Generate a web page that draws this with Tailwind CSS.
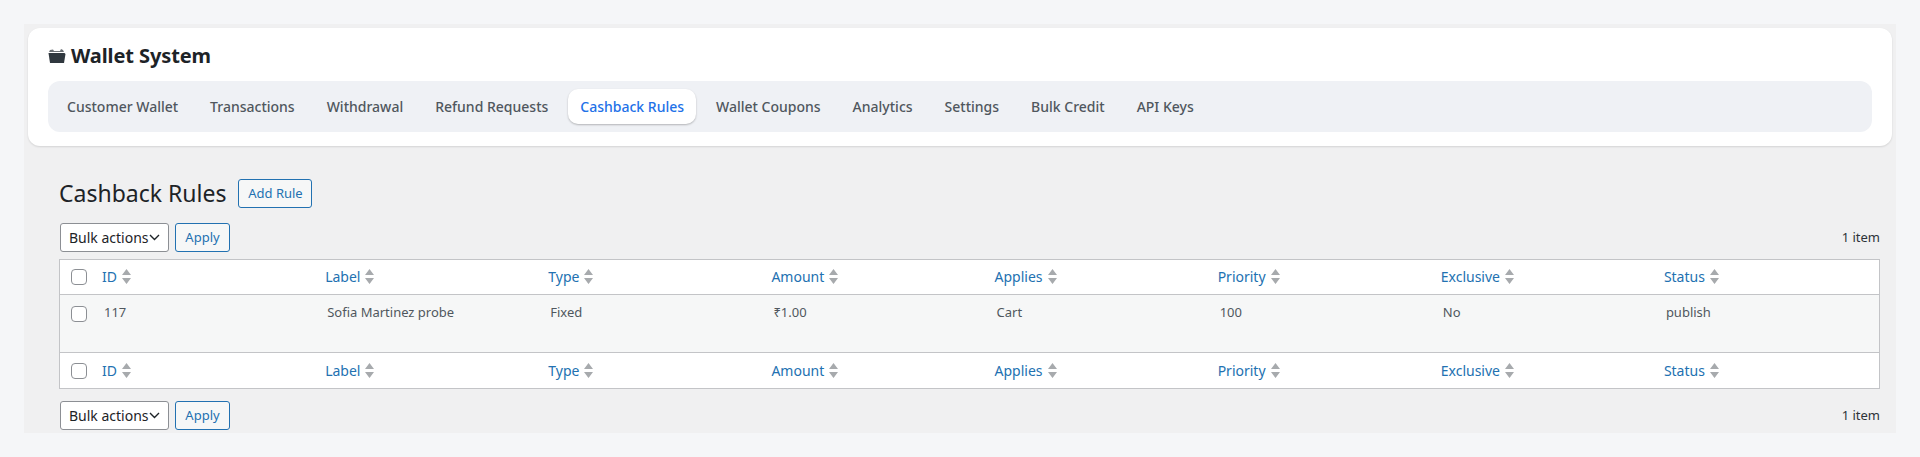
<!doctype html>
<html>
<head>
<meta charset="utf-8">
<script src="https://cdn.jsdelivr.net/npm/@tailwindcss/browser@4"></script>
</head>
<body class="bg-[#f5f6f8] font-['Noto_Sans',sans-serif] h-[457px] overflow-hidden">
<div class="ml-[24px] mr-[24px] pt-[24px]">
<div class="bg-[#f0f0f1] h-[409px] px-[4px] pt-[4px]">
  <div class="bg-white rounded-[12px] h-[118px] px-[20px] pt-[14px] shadow-[0_1px_2px_rgba(0,0,0,0.12)]">
    <h1 class="flex items-center gap-[5px] h-[28px] text-[20px] font-bold text-[#1d2327] leading-[28px] tracking-[-0.1px]">
      <svg class="w-[18px] h-[16px]" viewBox="0 0 18 16"><path d="M1 4 L2 2 L5 1.5 L6 3 L12 3 L13 1 L15 2 L16 4 Z" fill="#6b7075"/><path d="M0.5 5 H16.5 L17.5 6 L16 15 H2 Z" fill="#30383f"/></svg>
      <span>Wallet System</span>
    </h1>
    <nav class="mt-[11px] h-[51px] bg-[#eff1f5] rounded-[12px] px-[7px] flex items-center gap-[8px] text-[14px] font-medium text-[#50575e]">
      <a class="px-[12px] h-[35px] flex items-center">Customer Wallet</a>
      <a class="px-[12px] h-[35px] flex items-center">Transactions</a>
      <a class="px-[12px] h-[35px] flex items-center">Withdrawal</a>
      <a class="px-[12px] h-[35px] flex items-center">Refund Requests</a>
      <a class="px-[12px] h-[35px] flex items-center bg-white rounded-[10px] text-[#2271e8] shadow-[0_1px_2px_rgba(0,0,0,0.25)]">Cashback Rules</a>
      <a class="px-[12px] h-[35px] flex items-center">Wallet Coupons</a>
      <a class="px-[12px] h-[35px] flex items-center">Analytics</a>
      <a class="px-[12px] h-[35px] flex items-center">Settings</a>
      <a class="px-[12px] h-[35px] flex items-center">Bulk Credit</a>
      <a class="px-[12px] h-[35px] flex items-center">API Keys</a>
    </nav>
  </div>
  <div class="pl-[31px] pr-[12px] text-[#50575e] text-[13px]">
    <div class="flex items-center gap-[12px] h-[29px] mt-[33px]">
      <h2 class="text-[23px] font-normal text-[#1d2327] leading-[29px]">Cashback Rules</h2>
      <a class="w-[74px] h-[29px] flex items-center justify-center border border-[#2271b1] rounded-[3px] bg-[#f6f7f7] text-[#2271b1] text-[13px]">Add Rule</a>
    </div>
    <div class="flex items-center justify-between h-[29px] mt-[15px] pl-[1px]">
      <div class="flex items-center gap-[6px]">
        <div class="relative w-[109px] h-[29px]">
          <select class="appearance-none w-full h-full pl-[8px] bg-white border border-[#8c8f94] rounded-[3px] text-[14px] text-[#1d2327]"><option>Bulk actions</option></select>
          <svg class="absolute right-[9px] top-[11px] w-[11px] h-[7px]" viewBox="0 0 11 7"><path d="M1 1 L5.5 5.5 L10 1" fill="none" stroke="#1d2327" stroke-width="1.4"/></svg>
        </div>
        <a class="w-[55px] h-[29px] flex items-center justify-center border border-[#2271b1] rounded-[3px] bg-[#f6f7f7] text-[#2271b1]">Apply</a>
      </div>
      <span class="text-[#2c3338]">1 item</span>
    </div>
    <table class="w-[1821px] mt-[7px] table-fixed border border-[#c3c4c7] border-separate border-spacing-0 bg-white">
      <thead>
        <tr class="h-[35px]">
          <th class="w-[34px] pl-[11px] text-left border-b border-[#c3c4c7]"><input type="checkbox" class="appearance-none block w-[16px] h-[16px] bg-white border border-[#8c8f94] rounded-[4px]"></th>
          <th class="pl-[8px] text-left font-normal border-b border-[#c3c4c7]"><a class="inline-flex items-center gap-[5px] text-[14px] text-[#2271b1]">ID<svg class="w-[9px] h-[15px]" viewBox="0 0 9 15"><path d="M4.5 0 L9 6 H0 Z M4.5 15 L0 9 H9 Z" fill="#a7aaad"/></svg></a></th>
          <th class="pl-[8px] text-left font-normal border-b border-[#c3c4c7]"><a class="inline-flex items-center gap-[5px] text-[14px] text-[#2271b1]">Label<svg class="w-[9px] h-[15px]" viewBox="0 0 9 15"><path d="M4.5 0 L9 6 H0 Z M4.5 15 L0 9 H9 Z" fill="#a7aaad"/></svg></a></th>
          <th class="pl-[8px] text-left font-normal border-b border-[#c3c4c7]"><a class="inline-flex items-center gap-[5px] text-[14px] text-[#2271b1]">Type<svg class="w-[9px] h-[15px]" viewBox="0 0 9 15"><path d="M4.5 0 L9 6 H0 Z M4.5 15 L0 9 H9 Z" fill="#a7aaad"/></svg></a></th>
          <th class="pl-[8px] text-left font-normal border-b border-[#c3c4c7]"><a class="inline-flex items-center gap-[5px] text-[14px] text-[#2271b1]">Amount<svg class="w-[9px] h-[15px]" viewBox="0 0 9 15"><path d="M4.5 0 L9 6 H0 Z M4.5 15 L0 9 H9 Z" fill="#a7aaad"/></svg></a></th>
          <th class="pl-[8px] text-left font-normal border-b border-[#c3c4c7]"><a class="inline-flex items-center gap-[5px] text-[14px] text-[#2271b1]">Applies<svg class="w-[9px] h-[15px]" viewBox="0 0 9 15"><path d="M4.5 0 L9 6 H0 Z M4.5 15 L0 9 H9 Z" fill="#a7aaad"/></svg></a></th>
          <th class="pl-[8px] text-left font-normal border-b border-[#c3c4c7]"><a class="inline-flex items-center gap-[5px] text-[14px] text-[#2271b1]">Priority<svg class="w-[9px] h-[15px]" viewBox="0 0 9 15"><path d="M4.5 0 L9 6 H0 Z M4.5 15 L0 9 H9 Z" fill="#a7aaad"/></svg></a></th>
          <th class="pl-[8px] text-left font-normal border-b border-[#c3c4c7]"><a class="inline-flex items-center gap-[5px] text-[14px] text-[#2271b1]">Exclusive<svg class="w-[9px] h-[15px]" viewBox="0 0 9 15"><path d="M4.5 0 L9 6 H0 Z M4.5 15 L0 9 H9 Z" fill="#a7aaad"/></svg></a></th>
          <th class="pl-[8px] text-left font-normal border-b border-[#c3c4c7]"><a class="inline-flex items-center gap-[5px] text-[14px] text-[#2271b1]">Status<svg class="w-[9px] h-[15px]" viewBox="0 0 9 15"><path d="M4.5 0 L9 6 H0 Z M4.5 15 L0 9 H9 Z" fill="#a7aaad"/></svg></a></th>
        </tr>
      </thead>
      <tbody>
        <tr class="h-[57px] bg-[#f6f7f7] align-top">
          <td class="pl-[11px] pt-[11px]"><input type="checkbox" class="appearance-none block w-[16px] h-[16px] bg-white border border-[#8c8f94] rounded-[4px]"></td>
          <td class="pl-[10px] pt-[8px]">117</td>
          <td class="pl-[10px] pt-[8px]">Sofia Martinez probe</td>
          <td class="pl-[10px] pt-[8px]">Fixed</td>
          <td class="pl-[10px] pt-[8px]">₹1.00</td>
          <td class="pl-[10px] pt-[8px]">Cart</td>
          <td class="pl-[10px] pt-[8px]">100</td>
          <td class="pl-[10px] pt-[8px]">No</td>
          <td class="pl-[10px] pt-[8px]">publish</td>
        </tr>
      </tbody>
      <tfoot>
        <tr class="h-[36px]">
          <th class="pl-[11px] text-left border-t border-[#c3c4c7]"><input type="checkbox" class="appearance-none block w-[16px] h-[16px] bg-white border border-[#8c8f94] rounded-[4px]"></th>
          <th class="pl-[8px] text-left font-normal border-t border-[#c3c4c7]"><a class="inline-flex items-center gap-[5px] text-[14px] text-[#2271b1]">ID<svg class="w-[9px] h-[15px]" viewBox="0 0 9 15"><path d="M4.5 0 L9 6 H0 Z M4.5 15 L0 9 H9 Z" fill="#a7aaad"/></svg></a></th>
          <th class="pl-[8px] text-left font-normal border-t border-[#c3c4c7]"><a class="inline-flex items-center gap-[5px] text-[14px] text-[#2271b1]">Label<svg class="w-[9px] h-[15px]" viewBox="0 0 9 15"><path d="M4.5 0 L9 6 H0 Z M4.5 15 L0 9 H9 Z" fill="#a7aaad"/></svg></a></th>
          <th class="pl-[8px] text-left font-normal border-t border-[#c3c4c7]"><a class="inline-flex items-center gap-[5px] text-[14px] text-[#2271b1]">Type<svg class="w-[9px] h-[15px]" viewBox="0 0 9 15"><path d="M4.5 0 L9 6 H0 Z M4.5 15 L0 9 H9 Z" fill="#a7aaad"/></svg></a></th>
          <th class="pl-[8px] text-left font-normal border-t border-[#c3c4c7]"><a class="inline-flex items-center gap-[5px] text-[14px] text-[#2271b1]">Amount<svg class="w-[9px] h-[15px]" viewBox="0 0 9 15"><path d="M4.5 0 L9 6 H0 Z M4.5 15 L0 9 H9 Z" fill="#a7aaad"/></svg></a></th>
          <th class="pl-[8px] text-left font-normal border-t border-[#c3c4c7]"><a class="inline-flex items-center gap-[5px] text-[14px] text-[#2271b1]">Applies<svg class="w-[9px] h-[15px]" viewBox="0 0 9 15"><path d="M4.5 0 L9 6 H0 Z M4.5 15 L0 9 H9 Z" fill="#a7aaad"/></svg></a></th>
          <th class="pl-[8px] text-left font-normal border-t border-[#c3c4c7]"><a class="inline-flex items-center gap-[5px] text-[14px] text-[#2271b1]">Priority<svg class="w-[9px] h-[15px]" viewBox="0 0 9 15"><path d="M4.5 0 L9 6 H0 Z M4.5 15 L0 9 H9 Z" fill="#a7aaad"/></svg></a></th>
          <th class="pl-[8px] text-left font-normal border-t border-[#c3c4c7]"><a class="inline-flex items-center gap-[5px] text-[14px] text-[#2271b1]">Exclusive<svg class="w-[9px] h-[15px]" viewBox="0 0 9 15"><path d="M4.5 0 L9 6 H0 Z M4.5 15 L0 9 H9 Z" fill="#a7aaad"/></svg></a></th>
          <th class="pl-[8px] text-left font-normal border-t border-[#c3c4c7]"><a class="inline-flex items-center gap-[5px] text-[14px] text-[#2271b1]">Status<svg class="w-[9px] h-[15px]" viewBox="0 0 9 15"><path d="M4.5 0 L9 6 H0 Z M4.5 15 L0 9 H9 Z" fill="#a7aaad"/></svg></a></th>
        </tr>
      </tfoot>
    </table>
    <div class="flex items-center justify-between h-[29px] mt-[12px] pl-[1px]">
      <div class="flex items-center gap-[6px]">
        <div class="relative w-[109px] h-[29px]">
          <select class="appearance-none w-full h-full pl-[8px] bg-white border border-[#8c8f94] rounded-[3px] text-[14px] text-[#1d2327]"><option>Bulk actions</option></select>
          <svg class="absolute right-[9px] top-[11px] w-[11px] h-[7px]" viewBox="0 0 11 7"><path d="M1 1 L5.5 5.5 L10 1" fill="none" stroke="#1d2327" stroke-width="1.4"/></svg>
        </div>
        <a class="w-[55px] h-[29px] flex items-center justify-center border border-[#2271b1] rounded-[3px] bg-[#f6f7f7] text-[#2271b1]">Apply</a>
      </div>
      <span class="text-[#2c3338]">1 item</span>
    </div>
  </div>
</div>
</div>
</body>
</html>
